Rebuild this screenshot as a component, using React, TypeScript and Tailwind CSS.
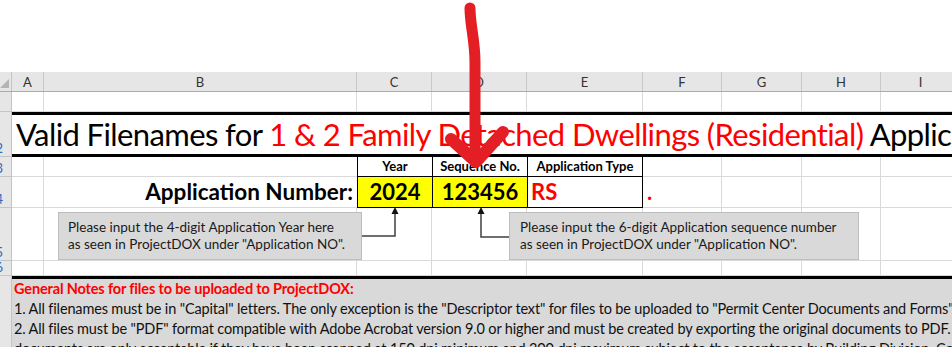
const font = "font-['Lato','Liberation_Sans',sans-serif]"

const cols = [
  { key: 'A', w: 'w-[32px]' },
  { key: 'B', w: 'w-[313px]' },
  { key: 'C', w: 'w-[75px]' },
  { key: 'D', w: 'w-[95px]' },
  { key: 'E', w: 'w-[116px]' },
  { key: 'F', w: 'w-[79px]' },
  { key: 'G', w: 'w-[80px]' },
  { key: 'H', w: 'w-[79px]' },
  { key: 'I', w: 'w-[80px]' },
]

const RowHead = ({ n, h }: { n?: string; h: string }) => (
  <div
    className={`relative ${h} w-[12px] shrink-0 overflow-hidden border-r border-b border-[#c4c4c4] bg-[#e6e6e6]`}
  >
    {n ? (
      <span className="absolute right-[8px] bottom-0 text-[13px] leading-[15px] text-[#2f6bbf]">
        {n}
      </span>
    ) : null}
  </div>
)

const BlankRow = ({ h, n }: { h: string; n?: string }) => (
  <div className="flex">
    <RowHead n={n} h={h} />
    {cols.map((c) => (
      <div
        key={c.key}
        className={`${c.w} ${h} shrink-0 border-r border-b border-[#d9d9d9]`}
      />
    ))}
  </div>
)

const Comment = ({ lines, className }: { lines: string[]; className: string }) => (
  <div
    className={`absolute ${className} h-[48px] border border-[#bdbdbd] bg-[#d9d9d9] pt-[6px] text-[13.5px] leading-[17px] text-[#1a1a1a]`}
  >
    {lines.map((l) => (
      <div key={l} className="whitespace-nowrap">
        {l}
      </div>
    ))}
  </div>
)

export default function App() {
  return (
    <div className={`relative h-[347px] w-[952px] overflow-hidden bg-white ${font}`}>
      <div className="h-[72px]" />

      {/* column letters */}
      <div className="flex h-[20px] border-b border-[#ababab] bg-[#e6e6e6]">
        <div className="relative w-[12px] shrink-0 border-r border-[#c4c4c4]">
          <svg className="absolute bottom-[3px] left-0" width="9" height="9">
            <polygon points="9,0 9,9 0,9" fill="#b4b4b4" />
          </svg>
        </div>
        {cols.map((c) => (
          <div
            key={c.key}
            className={`${c.w} shrink-0 border-r border-[#c8c8c8] text-center text-[13px] leading-[20px] text-[#333]`}
          >
            {c.key}
          </div>
        ))}
      </div>

      <BlankRow h="h-[20px]" />

      {/* title */}
      <div className="flex">
        <RowHead n="2" h="h-[45px]" />
        <div className="h-[45px] flex-1 overflow-hidden border-t-[3px] border-b-[3px] border-black pl-[4px] text-[31px] leading-[38px] whitespace-nowrap tracking-[-0.6px] text-black">
          Valid Filenames for{' '}
          <span className="text-[#ff0000]">1 &amp; 2 Family Detached Dwellings (Residential)</span>{' '}
          Applications
        </div>
      </div>

      {/* column captions */}
      <div className="flex">
        <RowHead n="3" h="h-[20px]" />
        <div className="h-[20px] w-[32px] shrink-0 border-r border-b border-[#d9d9d9]" />
        <div className="h-[20px] w-[313px] shrink-0 border-b border-[#d9d9d9]" />
        <div className="flex h-[20px] w-[286px] shrink-0 border-b border-l border-r border-black text-[13px] leading-[19px] font-bold">
          <div className="w-[75px] border-r border-black text-center">Year</div>
          <div className="w-[95px] border-r border-black text-center">Sequence No.</div>
          <div className="flex-1 text-center">Application Type</div>
        </div>
        <div className="h-[20px] w-[79px] shrink-0 border-r border-b border-[#d9d9d9]" />
        <div className="h-[20px] w-[80px] shrink-0 border-r border-b border-[#d9d9d9]" />
        <div className="h-[20px] w-[79px] shrink-0 border-r border-b border-[#d9d9d9]" />
        <div className="h-[20px] w-[80px] shrink-0 border-r border-b border-[#d9d9d9]" />
      </div>

      {/* application number */}
      <div className="flex">
        <RowHead n="4" h="h-[31px]" />
        <div className="h-[31px] w-[32px] shrink-0 border-r border-b border-[#d9d9d9]" />
        <div className="h-[31px] w-[313px] shrink-0 border-b border-[#d9d9d9] pr-[4px] text-right text-[22.5px] leading-[30px] font-bold">
          Application Number:
        </div>
        <div className="flex h-[31px] w-[286px] shrink-0 border-b border-l border-r border-black text-[22px] leading-[30px] font-bold">
          <div className="w-[75px] border-r border-black bg-[#ffff00] text-center">2024</div>
          <div className="w-[95px] border-r border-black bg-[#ffff00] text-center">123456</div>
          <div className="flex-1 pl-[3px] text-[#ff0000]">RS</div>
        </div>
        <div className="h-[31px] w-[79px] shrink-0 border-r border-b border-[#d9d9d9] pl-[4px] text-[22px] leading-[30px] font-bold text-[#ff0000]">
          .
        </div>
        <div className="h-[31px] w-[80px] shrink-0 border-r border-b border-[#d9d9d9]" />
        <div className="h-[31px] w-[79px] shrink-0 border-r border-b border-[#d9d9d9]" />
        <div className="h-[31px] w-[80px] shrink-0 border-r border-b border-[#d9d9d9]" />
      </div>

      <BlankRow h="h-[53px]" n="5" />
      <BlankRow h="h-[15px]" n="6" />

      {/* notes */}
      <div className="flex">
        <div className="h-[80px] w-[12px] shrink-0 border-r border-[#c4c4c4] bg-[#e6e6e6]" />
        <div className="h-[80px] flex-1 overflow-hidden border-t-[3px] border-black bg-[#d9d9d9] pl-[2px] text-[14.5px] leading-[20px] whitespace-nowrap tracking-[-0.15px] text-[#111]">
          <div className="font-bold text-[#ff0000]">General Notes for files to be uploaded to ProjectDOX:</div>
          <div>
            1. All filenames must be in "Capital" letters. The only exception is the "Descriptor text" for files to be uploaded to "Permit Center Documents and Forms" folder.
          </div>
          <div>
            2. All files must be "PDF" format compatible with Adobe Acrobat version 9.0 or higher and must be created by exporting the original documents to PDF. Any scanned
          </div>
          <div>
            documents are only acceptable if they have been scanned at 150 dpi minimum and 300 dpi maximum subject to the acceptance by Building Division. Contact
          </div>
        </div>
      </div>

      {/* comments */}
      <Comment
        className="top-[212px] left-[58px] w-[304px] pl-[9px]"
        lines={['Please input the 4-digit Application Year here', 'as seen in ProjectDOX under "Application NO".']}
      />
      <Comment
        className="top-[212px] left-[509px] w-[350px] pl-[10px]"
        lines={['Please input the 6-digit Application sequence number', 'as seen in ProjectDOX under "Application NO".']}
      />

      {/* connectors and red marker arrow */}
      <svg className="pointer-events-none absolute top-0 left-0" width="952" height="347">
        <polyline points="362,236 395,236 395,214" fill="none" stroke="#404040" strokeWidth="1.5" />
        <polygon points="395,207 391.5,214 398.5,214" fill="#111" />
        <polyline points="509,237 481,237 481,214" fill="none" stroke="#404040" strokeWidth="1.5" />
        <polygon points="481,207 477.5,214 484.5,214" fill="#111" />
        <path
          d="M470 8 C470 25 475 40 475 62 L475 158"
          fill="none"
          stroke="#e31e24"
          strokeWidth="11"
          strokeLinecap="round"
        />
        <path
          d="M451 139 L476 162 L503 132"
          fill="none"
          stroke="#e31e24"
          strokeWidth="12"
          strokeLinecap="round"
          strokeLinejoin="round"
        />
      </svg>
    </div>
  )
}
